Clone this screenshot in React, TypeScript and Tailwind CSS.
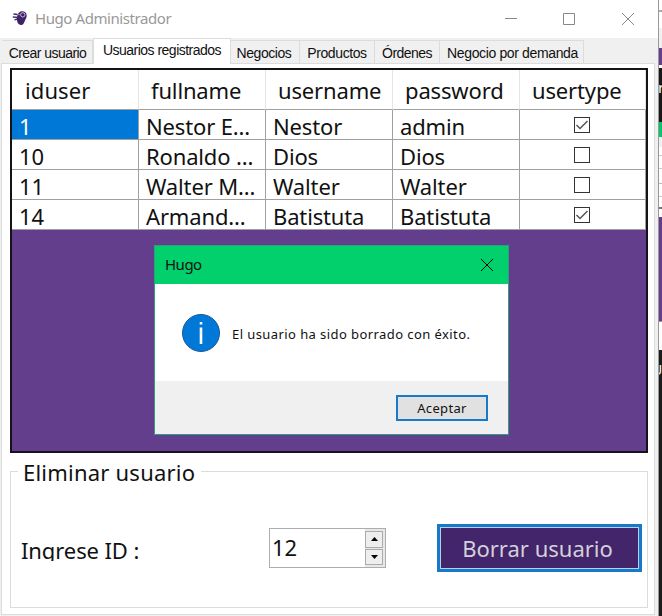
import React from "react";

type User = { id: string; fullname: string; username: string; password: string; admin: boolean };

const users: User[] = [
  { id: "1", fullname: "Nestor E...", username: "Nestor", password: "admin", admin: true },
  { id: "10", fullname: "Ronaldo ...", username: "Dios", password: "Dios", admin: false },
  { id: "11", fullname: "Walter M...", username: "Walter", password: "Walter", admin: false },
  { id: "14", fullname: "Armand...", username: "Batistuta", password: "Batistuta", admin: true },
];

const headers = ["iduser", "fullname", "username", "password", "usertype"];

function HugoLogo() {
  return (
    <svg width="16" height="16" viewBox="0 0 16 16" className="mt-[10px] ml-3">
      <path d="M8.500 1.500C12 .4 14.700 2.400 14.700 5.400c0 2.200-1 3.400-1.700 5-1 2.400-1.800 4.600-3.700 4.600-2 0-3.800-1.500-4.200-4C4.700 8.200 5 2.800 8.500 1.500Z" fill="#3f2268" />
      <circle cx="10.800" cy="4.800" r="2.200" fill="none" stroke="#cfc5de" strokeWidth=".9" />
      <circle cx="7" cy="4.600" r=".7" fill="#cfc5de" />
      <path d="M1.500 4 5.500 4.500M.8 7l5 .3M2.500 9.800l3-.8" stroke="#3f2268" strokeWidth="1.300" />
    </svg>
  );
}

function TitleBar() {
  return (
    <div className="flex h-[38px] bg-white">
      <HugoLogo />
      <span className="ml-[7px] mt-[7px] text-[15px] leading-[22px] tracking-[-0.42px] text-[#999]">Hugo Administrador</span>
      <svg width="134" height="38" viewBox="0 0 134 38" className="ml-auto mr-[20px]" fill="none" stroke="#888" strokeWidth="1">
        <path d="M1 18.500h12M59.500 13.500h11v11h-11zM118 13l12 12M130 13l-12 12" />
      </svg>
    </div>
  );
}

function Tabs() {
  const tab = "h-[23px] shrink-0 border border-[#dcdcdc] border-b-0 border-l-0 bg-[#f0f0f0] pt-[3px] text-center text-[14px] leading-[18px] text-[#111] whitespace-nowrap";
  return (
    <div className="flex h-[25px] items-end pl-[2px] font-['Liberation_Sans',Arial,sans-serif]">
      <div className={`${tab} w-[91px] border-l pl-px tracking-[-0.55px]`}>Crear usuario</div>
      <div className="h-[26px] w-[138px] shrink-0 -mb-px border border-b-0 border-[#dcdcdc] bg-white pt-[2px] text-center text-[14px] leading-[18px] tracking-[-0.52px] whitespace-nowrap">Usuarios registrados</div>
      <div className={`${tab} w-[69px] pr-[2px] tracking-[-0.45px]`}>Negocios</div>
      <div className={`${tab} w-[75px] tracking-[-0.4px]`}>Productos</div>
      <div className={`${tab} w-[65px] tracking-[-0.55px]`}>Órdenes</div>
      <div className={`${tab} w-[144px] pl-[2px] tracking-[-0.36px]`}>Negocio por demanda</div>
    </div>
  );
}

function Check({ on }: { on: boolean }) {
  return (
    <svg width="16" height="16" viewBox="0 0 16 16" fill="none" className="mr-[2px]">
      <rect x=".5" y=".5" width="15" height="15" stroke="#333" />
      {on && <path d="M2.500 8 6 11.500 13.500 4" stroke="#555" strokeWidth="1.500" />}
    </svg>
  );
}

const columns = "grid grid-cols-[127px_127px_127px_127px_126px]";

function UserGrid() {
  const cell = "border-r border-b border-[#a0a0a0] pl-[7px] whitespace-nowrap";
  return (
    <div className="h-[385px] w-[638px] border-2 border-[#15121a] bg-[#623e8c]">
      <div className={`${columns} h-[40px] bg-white text-[22px] tracking-[-0.15px]`}>
        {headers.map((h) => (
          <div key={h} className="border-r border-b border-r-[#e5e5e5] border-b-[#a0a0a0] pl-[12px] pt-[5px] leading-[30px] first:pl-[13px] first:tracking-[0.1px]">{h}</div>
        ))}
      </div>
      {users.map((u, i) => (
        <div key={u.id} className={`${columns} h-[30px] grid-rows-[30px] bg-white text-[22px] leading-[32px] tracking-[-0.15px]`}>
          <div className={`${cell} ${i === 0 ? "bg-[#0078d7] text-white" : ""}`}>{u.id}</div>
          <div className={cell}>{u.fullname}</div>
          <div className={cell}>{u.username}</div>
          <div className={cell}>{u.password}</div>
          <div className="flex items-center justify-center border-r border-b border-[#a0a0a0]"><Check on={u.admin} /></div>
        </div>
      ))}
    </div>
  );
}

function DeletePanel() {
  return (
    <section className="mt-[4px] h-[151px] w-[638px]">
      <div className="flex h-[28px] items-start">
        <div className="mt-[14px] h-[14px] w-[8px] border-l border-t border-[#dcdcdc]" />
        <h2 className="w-[183px] pl-[5px] text-[22px] leading-[30px] tracking-[0.22px] whitespace-nowrap">Eliminar usuario</h2>
        <div className="mt-[14px] h-[14px] grow border-r border-t border-[#dcdcdc]" />
      </div>
      <div className="flex h-[123px] items-start border border-t-0 border-[#dcdcdc]">
        <label className="ml-[10px] mt-[50px] h-[26px] w-[248px] overflow-hidden text-[22px] leading-[31px] tracking-[-0.1px]">Ingrese ID :</label>
        <div className="mt-[43px] flex h-[40px] w-[117px] border border-[#abadb3] bg-white">
          <span className="grow pl-[2px] pt-[3px] text-[22px] leading-[30px]">12</span>
          <div className="flex w-[20px] flex-col gap-px bg-[#e8e8e8] py-[2px] pr-[2px]">
            <div className="flex h-[17px] items-center justify-center border border-[#acacac] bg-[#eee]"><svg width="7" height="4" viewBox="0 0 7 4"><path d="M0 4 3.500 0 7 4z" /></svg></div>
            <div className="flex h-[17px] items-center justify-center border border-[#acacac] bg-[#eee]"><svg width="7" height="4" viewBox="0 0 7 4"><path d="M0 0h7L3.500 4z" /></svg></div>
          </div>
        </div>
        <button className="ml-[51px] mt-[39px] h-[48px] w-[205px] shrink-0 border-[3px] border-[#1679ca] bg-[#b9cfee] p-px">
          <span className="block h-full bg-[#42256a] pr-1 pt-[5px] text-[22px] leading-[30px] text-[#d5d0da]">Borrar usuario</span>
        </button>
      </div>
    </section>
  );
}

function MessageDialog() {
  return (
    <div className="absolute left-[154px] top-[245px] flex h-[190px] w-[355px] flex-col border border-[#2ca07a] bg-white">
      <div className="flex h-[38px] shrink-0 bg-[#02d06c]">
        <span className="pl-[10px] pt-[7px] text-[15px] leading-[22px] tracking-[-0.5px]">Hugo</span>
        <svg width="14" height="14" viewBox="0 0 14 14" className="ml-auto mr-[14px] mt-[12px]" stroke="#000" strokeWidth="1"><path d="M1 1l12 12M13 1 1 13" /></svg>
      </div>
      <div className="flex h-[97px] shrink-0">
        <svg width="38" height="38" viewBox="0 0 38 38" className="ml-[27px] mt-[30px]">
          <circle cx="19" cy="19" r="18.500" fill="#0078d7" stroke="#17599a" />
          <path d="M17.700 8h2.600v2.600h-2.600zM17.700 13.500h2.600V30h-2.600z" fill="#fff" />
        </svg>
        <p className="ml-[12px] mt-[40px] text-[13px] leading-[20px] tracking-[0.42px] whitespace-nowrap">El usuario ha sido borrado con éxito.</p>
      </div>
      <div className="flex grow justify-end bg-[#f0f0f0] pr-[20px] pt-[14px]">
        <button className="h-[26px] w-[92px] border-2 border-[#1679ca] bg-[#e1e1e1] text-[13px] leading-[22px] tracking-[0.35px]">Aceptar</button>
      </div>
    </div>
  );
}

function BackgroundSliver() {
  return (
    <div className="flex w-[4px] flex-col overflow-hidden border-l border-[#999] bg-white text-[12px]">
      <div className="h-[28px] shrink-0 pt-[10px]"><div className="h-[2px] bg-[#aaa]" /></div>
      <div className="h-[20px] shrink-0 bg-[#f0f0f0]" />
      <div className="h-[17px] shrink-0 bg-[#623e8c]" />
      <div className="h-[3px] shrink-0 bg-white" />
      <div className="h-[54px] shrink-0 bg-[#181818] pt-[9px] text-[15px] leading-[20px] text-white"><span className="-ml-px">r</span></div>
      <div className="h-[15px] shrink-0 bg-[#02c96b]" />
      <div className="h-[10px] shrink-0 bg-[#f0f0f0]" />
      <div className="h-[9px] shrink-0 border-b border-[#ccc]" />
      <div className="h-[13px] shrink-0 border-b border-[#ccc]" />
      <div className="h-[15px] shrink-0 border-b border-[#bbb]" />
      <div className="h-[13px] shrink-0 border-b border-[#ccc]" />
      <div className="h-[12px] shrink-0 border-b-2 border-[#777]" />
      <div className="h-[8px] shrink-0" />
      <div className="h-[104px] shrink-0 bg-[#623e8c]" />
      <div className="h-[29px] shrink-0 border-t border-[#999]" />
      <div className="grow bg-[#1c1c1c] pt-[10px] text-[14px] leading-[20px] text-white"><span className="-ml-[7px]">U</span></div>
    </div>
  );
}

export default function App() {
  return (
    <div className="relative flex h-[616px] w-[662px] overflow-hidden bg-[#f0f0f0] font-['Noto_Sans','Open_Sans',sans-serif] text-[#111]">
      <main className="w-[658px] shrink-0 bg-[#f0f0f0]">
        <TitleBar />
        <Tabs />
        <div className="ml-[1px] mr-[3px] h-[552px] border border-[#dcdcdc] bg-white pl-[8px] pr-[5px] pt-[4px]">
          <UserGrid />
          <DeletePanel />
        </div>
      </main>
      <BackgroundSliver />
      <MessageDialog />
    </div>
  );
}
